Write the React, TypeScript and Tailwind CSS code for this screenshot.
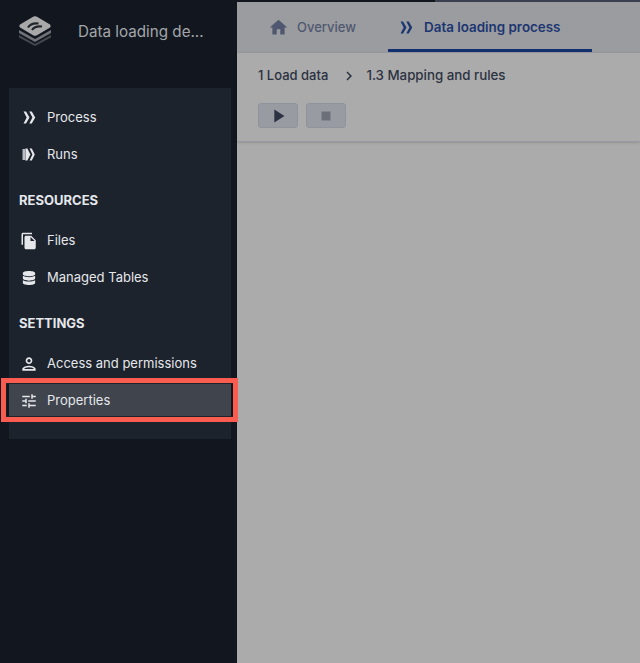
import type { ReactNode } from "react";
import { FaDatabase } from "react-icons/fa";
import { MdChevronRight, MdFileCopy, MdHome, MdOutlinePerson, MdPlayArrow, MdStop, MdTune } from "react-icons/md";

function Logo() {
  return (
    <svg width="34" height="32" viewBox="0 0 34 32">
      <path d="M1 20 L17 29 L33 20 L33 22.5 L17 31 L1 22.5 Z" fill="#46494f" />
      <path d="M1 15 L17 24 L33 15 L33 18 L17 27 L1 18 Z" fill="#6f7276" />
      <path d="M15.5 1.6 Q17 1 18.5 1.6 L32 9.5 Q33.5 11 32 12.5 L18.5 20.4 Q17 21 15.5 20.4 L2 12.5 Q0.5 11 2 9.5 Z" fill="#a9a9a9" />
      <path d="M10 12.5 Q13 7.5 20.5 8.5 M14 15 Q17 10.5 24 11.5" stroke="#22262c" strokeWidth="2.2" fill="none" />
    </svg>
  );
}

function Chevrons({ size = 13, color = "#e5e7eb" }: { size?: number; color?: string }) {
  return (
    <svg width={size} height={size} viewBox="0 0 12 12" fill={color}>
      <path d="M0.5 0.5 H2.8 L6 6 L2.8 11.5 H0.5 L3.4 6 Z" />
      <path d="M5.8 0.5 H8.1 L11.3 6 L8.1 11.5 H5.8 L8.7 6 Z" />
    </svg>
  );
}

function RunsIcon() {
  return (
    <svg width="13" height="13" viewBox="0 0 13 13" fill="#e5e7eb">
      <path d="M0.5 1 H3 L3 12 H0.5 Z" fill="#b9bdc4" />
      <path d="M3.4 0.5 H5.4 L8.4 6.5 L5.4 12.5 H3.4 Z" />
      <path d="M7.6 0.5 H9.8 L12.8 6.5 L9.8 12.5 H7.6 L10.4 6.5 Z" />
    </svg>
  );
}

function NavItem({ icon, label, active }: { icon: ReactNode; label: string; active?: boolean }) {
  return (
    <div className={`flex h-[37px] items-center pl-[12px] text-[13px] text-[#e5e7eb] ${active ? "bg-[#3f444d]" : ""}`}>
      <span className="flex w-[26px] items-center">{icon}</span>
      {label}
    </div>
  );
}

export default function App() {
  return (
    <div className="relative flex h-[663px] w-[640px] overflow-hidden font-['Inter',sans-serif]">
      <aside className="flex w-[237px] shrink-0 flex-col bg-[#12171f]">
        <div className="flex h-[88px] items-start pl-[18px] pt-[15px]">
          <Logo />
          <span className="ml-[26px] mt-[6px] text-[15.2px] text-[#a3a6aa]">Data loading de...</span>
        </div>
        <nav className="ml-[9px] h-[351px] w-[222px] bg-[#1c232d] pt-[11px]">
          <NavItem icon={<span className="ml-[2px] flex"><Chevrons /></span>} label="Process" />
          <NavItem icon={<span className="ml-[1px] flex"><RunsIcon /></span>} label="Runs" />
          <h3 className="ml-[10px] mb-[14px] mt-[19px] text-[13px] font-bold leading-[16px] text-[#e5e7eb]">RESOURCES</h3>
          <NavItem icon={<MdFileCopy size={18} color="#e5e7eb" className="-ml-[1px]" />} label="Files" />
          <NavItem icon={<FaDatabase size={14} color="#e5e7eb" className="ml-[1px]" />} label="Managed Tables" />
          <h3 className="ml-[10px] mb-[14px] mt-[19px] text-[13px] font-bold leading-[16px] text-[#e5e7eb]">SETTINGS</h3>
          <NavItem icon={<MdOutlinePerson size={20} color="#e5e7eb" className="-ml-[2px]" />} label="Access and permissions" />
          <NavItem icon={<MdTune size={18} color="#e5e7eb" className="-ml-[1px]" />} label="Properties" active />
        </nav>
      </aside>
      <main className="flex-1 bg-[#ababab]">
        <div className="flex h-[2px]">
          <div className="w-[198px] bg-[#12171f]" />
          <div className="flex-1 bg-[#3a4050]" />
        </div>
        <div className="flex h-[51px] items-center border-b border-[#97999f] bg-[#9b9c9f] pl-[33px]">
          <div className="flex h-full items-center pt-[1px] text-[13px] font-medium text-[#4f5870]">
            <MdHome size={21} color="#4f5870" className="-ml-[2px] mr-[8px]" /> Overview
          </div>
          <div className="relative ml-[32px] flex h-full w-[204px] items-center pl-[12px] pt-[1px] text-[13.4px] font-semibold text-[#1c3672]">
            <Chevrons color="#1c3672" /> <span className="ml-[11px]">Data loading process</span>
            <div className="absolute bottom-0 left-0 h-[3px] w-full bg-[#122f6e]" />
          </div>
        </div>
        <div className="border-b border-[#97999f] pb-[13px] pl-[21px] pt-[15px] shadow-sm">
          <div className="flex h-[16px] items-center text-[13px] font-medium text-[#2b3242]">
            1 Load data
            <MdChevronRight size={18} className="ml-[12px] mr-[8px]" />
            <span className="text-[13.3px]">1.3 Mapping and rules</span>
          </div>
          <div className="mt-[19px] flex gap-[8px]">
            <button className="flex h-[25px] w-[40px] items-center justify-center rounded-[3px] border border-[#8f949c] bg-[#989ca2]">
              <MdPlayArrow size={22} color="#2b3242" />
            </button>
            <button className="flex h-[25px] w-[40px] items-center justify-center rounded-[3px] border border-[#8f949c] bg-[#989ca2]">
              <MdStop size={18} color="#6c7078" />
            </button>
          </div>
        </div>
      </main>
      <div className="absolute left-[1px] top-[378px] h-[44px] w-[237px] border-[5px] border-[#fb5c50] shadow-[inset_0_1px_0_#1c232d,inset_0_-1px_0_#1c232d]" />
    </div>
  );
}
